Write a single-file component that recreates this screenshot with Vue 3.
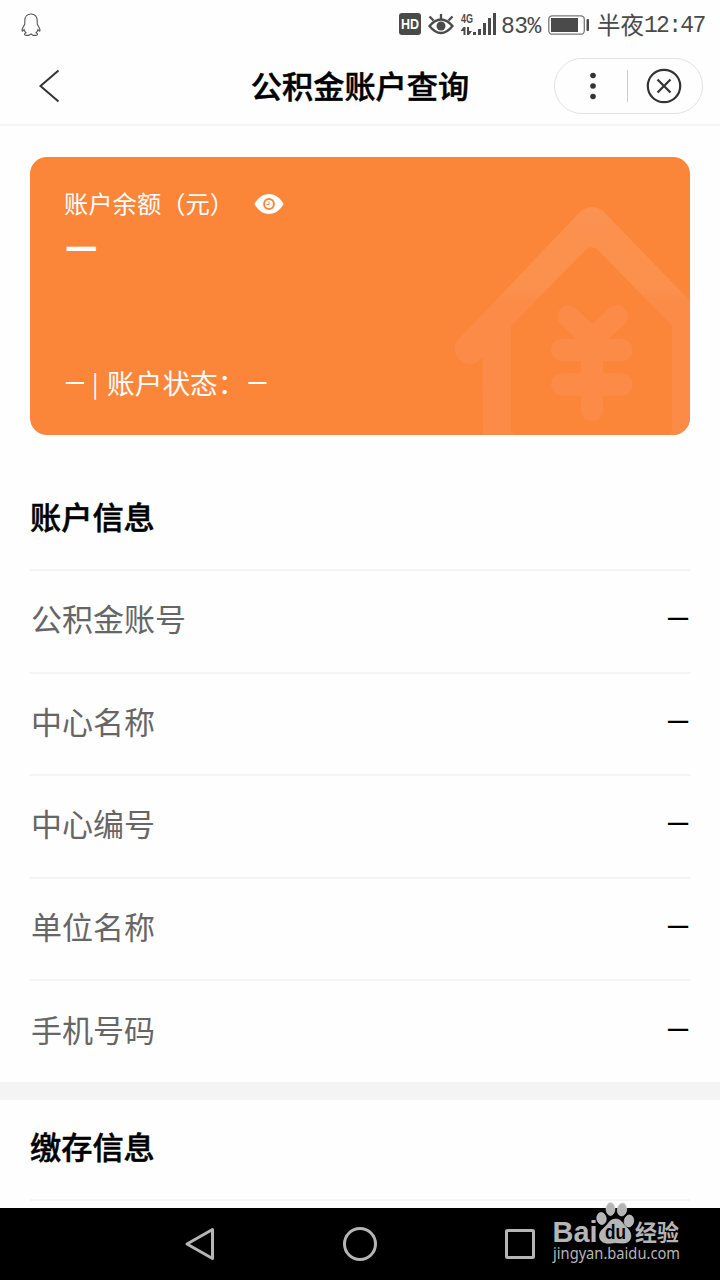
<template>
  <div class="page">
    <!-- 状态栏 -->
    <div class="status-bar">
      <svg class="qq-icon" width="22" height="26" viewBox="0 0 22 26" fill="none" stroke="#555" stroke-width="1.1">
        <path d="M11 2C7 2 4.800 5 4.800 8.700V12L2.400 16.500C1.700 18.500 2 20.200 3 18.800L4 17.700C4.300 19 5 20 5.900 20.700C3.800 21.700 4.200 23.400 6.200 23.400H8.700L11 22L13.300 23.400H15.800C17.800 23.400 18.200 21.700 16.100 20.700C17 20 17.700 19 18 17.700L19 18.800C20 20.200 20.300 18.500 19.600 16.500L17.200 12V8.700C17.200 5 15 2 11 2Z" />
      </svg>
      <svg class="status-icons" width="98" height="28" viewBox="0 0 98 28">
        <rect x="0" y="3" width="22" height="22" rx="3" fill="#4a4a4a" />
        <text x="2" y="19" textLength="18" lengthAdjust="spacingAndGlyphs" class="hd">HD</text>
        <g fill="none" stroke="#4a4a4a" stroke-width="2.3">
          <path d="M30.500 16Q36 9.500 42 9.500T53.500 16Q48 23 42 23T30.500 16Z" />
          <path d="M42 9V4M34.500 10.500L30.500 6.500M49.500 10.500L53.500 6.500" />
        </g>
        <circle cx="42" cy="16" r="4.500" fill="#4a4a4a" />
        <text x="62" y="13" textLength="12" lengthAdjust="spacingAndGlyphs" class="net">4G</text>
        <path fill="#4a4a4a" d="M64.500 17h2v8h-2v-4h-3zM68 17h2v4h3l-3 4h-2zM74 22h3v3h-3zM79 19h3v6h-3zM84 13h3v12h-3zM89 8h3v17h-3zM94 3h3v22h-3z" />
      </svg>
      <span class="percent">83%</span>
      <svg class="battery" width="42" height="22" viewBox="0 0 42 22">
        <rect x=".8" y="1.800" width="35.500" height="18.400" rx="3.500" fill="none" stroke="#777" stroke-width="1.300" />
        <rect x="3" y="4" width="27" height="14" fill="#4a4a4a" />
        <rect x="38.500" y="5" width="2.500" height="12" rx="1" fill="#4a4a4a" />
      </svg>
      <span class="period">半夜</span>
      <span class="clock">12:47</span>
    </div>

    <!-- 标题栏 -->
    <header class="nav">
      <svg class="back" width="24" height="36" viewBox="0 0 24 36" fill="none" stroke="#333" stroke-width="2">
        <path d="M20.500 2.500L2.500 18L20.500 33.500" />
      </svg>
      <h1>公积金账户查询</h1>
      <div class="capsule">
        <svg width="36" height="36" viewBox="0 0 36 36" fill="#333">
          <circle cx="18" cy="7.500" r="2.800" />
          <circle cx="18" cy="18" r="2.800" />
          <circle cx="18" cy="28.500" r="2.800" />
        </svg>
        <i class="divider"></i>
        <svg width="36" height="36" viewBox="0 0 36 36" fill="none" stroke="#333" stroke-width="2.200">
          <circle cx="18" cy="18" r="16.200" />
          <path d="M11.500 11.500L24.500 24.500M24.500 11.500L11.500 24.500" />
        </svg>
      </div>
    </header>

    <!-- 余额卡片 -->
    <section class="card">
      <svg class="house" width="240" height="232" viewBox="0 0 240 232">
        <defs>
          <linearGradient id="fade" x1="0" y1="0" x2="0" y2="1">
            <stop offset="0" stop-color="#fc924f" />
            <stop offset=".35" stop-color="#fc904d" />
            <stop offset=".43" stop-color="#fb8b46" />
            <stop offset="1" stop-color="#fb8b46" />
          </linearGradient>
        </defs>
        <path fill="url(#fade)" d="M130.500 8.500Q142 -1 153.500 8.500L240 98V232H220Q222 230 222 226V123L148.500 47.500Q142 41 135 47.500L61 123V226Q61 230 65 232H33L32.500 154L27 159A15 15 0 0 1 7 138Z" />
        <g fill="none" stroke="#fb8b46" stroke-width="22" stroke-linecap="round">
          <path d="M118.500 113.500L142 136L167 113.500M112 147H171.500M112 181.500H171.500M142 138V207" />
        </g>
      </svg>
      <div class="balance-label">
        <span>账户余额（元）</span>
        <svg width="30" height="22" viewBox="0 0 30 22">
          <path fill="#fff" d="M.5 11C3.500 5 9 1 15 1S26.500 5 29.500 11C26.500 17 21 21 15 21S3.500 17 .5 11Z" />
          <circle cx="15" cy="11" r="4.900" fill="none" stroke="#fb863a" stroke-width="2" />
          <path d="M12.500 11.500H15V8.500" fill="none" stroke="#fb863a" stroke-width="1" />
        </svg>
      </div>
      <div class="balance">—</div>
      <div class="state"><span class="dash">—</span><span class="bar">|</span><span>账户状态：</span><span class="dash last">—</span></div>
    </section>

    <!-- 账户信息 -->
    <section class="info">
      <h2>账户信息</h2>
      <div v-for="item in accountInfo" :key="item.label" class="row">
        <span>{{ item.label }}</span>
        <b>{{ item.value }}</b>
      </div>
    </section>
    <section class="info deposit">
      <h2>缴存信息</h2>
      <div class="row"></div>
    </section>

    <!-- 系统导航键 -->
    <footer class="keys">
      <svg width="36" height="36" viewBox="0 0 36 36"><path d="M30.500 3.500V32.500L5 18Z" /></svg>
      <svg width="36" height="36" viewBox="0 0 36 36"><circle cx="18" cy="18" r="15.500" /></svg>
      <svg width="36" height="36" viewBox="0 0 36 36"><rect x="4.500" y="4.500" width="27" height="27" rx="1" /></svg>
      <svg class="watermark" width="134" height="66" viewBox="0 0 134 66">
        <g class="paw">
          <ellipse cx="50.500" cy="18.500" rx="4.700" ry="6" transform="rotate(-10 50.500 18.500)" />
          <ellipse cx="59.500" cy="9" rx="4.500" ry="6.500" />
          <ellipse cx="71" cy="9.500" rx="4.700" ry="6.500" transform="rotate(8 71 9.500)" />
          <ellipse cx="78" cy="21" rx="4.700" ry="6" transform="rotate(10 78 21)" />
          <path d="M64.500 19C70 19 72 24 76 28C82 33 81 43 73 43C69 43.500 66 42 61 43C54 44 48.500 42 48.500 36C48.500 30 54 28 57.500 23Q60 19 64.500 19Z" />
        </g>
        <text class="brand" x="1.500" y="42" textLength="45" lengthAdjust="spacingAndGlyphs">Bai</text>
        <text class="du" x="54" y="38.500" textLength="21" lengthAdjust="spacingAndGlyphs">du</text>
        <text class="exp" x="84" y="40.500" textLength="44" lengthAdjust="spacingAndGlyphs">经验</text>
        <text class="site" x="2" y="59" textLength="127" lengthAdjust="spacingAndGlyphs">jingyan.baidu.com</text>
      </svg>
    </footer>
  </div>
</template>

<script setup>
import { ref } from 'vue'

const accountInfo = ref([
  { label: '公积金账号', value: '—' },
  { label: '中心名称', value: '—' },
  { label: '中心编号', value: '—' },
  { label: '单位名称', value: '—' },
  { label: '手机号码', value: '—' }
])
</script>

<style>
body {
  margin: 0;
  background: #fefefe;
}
</style>

<style scoped>
.page {
  width: 720px;
  height: 1280px;
  overflow: hidden;
  display: flex;
  flex-direction: column;
  background: #fefefe;
  font-family: "Noto Sans CJK SC", sans-serif;
  color: #000;
}

.page > * {
  flex-shrink: 0;
}

svg {
  display: block;
  flex-shrink: 0;
}

.status-bar {
  height: 48px;
  display: flex;
  align-items: center;
  padding: 0 16px 0 20px;
  color: #4a4a4a;
}

.qq-icon {
  margin-top: 2px;
}

.status-icons {
  margin-left: auto;
}

.hd {
  font: bold 15px "Liberation Sans", sans-serif;
  fill: #fff;
}

.net {
  font: bold 13px "Liberation Sans", sans-serif;
  fill: #4a4a4a;
}

.percent {
  width: 43px;
  padding: 6px 0 0 4px;
  font: 23px "Liberation Mono", monospace;
  letter-spacing: -0.5px;
}

.battery {
  margin-left: 4px;
  margin-top: 2px;
}

.period {
  margin-left: 7px;
  font-size: 23.5px;
  line-height: 30px;
  font-weight: 400;
}

.clock {
  padding-top: 3px;
  font: 23px "Liberation Mono", monospace;
  letter-spacing: -1.7px;
  width: 60px;
}

.nav {
  height: 76px;
  display: grid;
  grid-template-columns: 1fr auto 1fr;
  align-items: center;
  padding: 0 17px 0 38px;
  border-bottom: 2px solid #f4f4f4;
}

h1,
h2 {
  margin: 0;
  font-size: 31.2px;
  font-weight: 500;
  -webkit-text-stroke: 0.5px #000;
}

h1 {
  line-height: 40px;
  margin: 0 21px 3px 0;
}

.capsule {
  box-sizing: border-box;
  width: 149px;
  height: 56px;
  border: 1px solid #e2e2e2;
  border-radius: 28px;
  display: flex;
  align-items: center;
  padding: 0 20px;
  justify-self: end;
}

.divider {
  width: 1px;
  height: 32px;
  margin: 0 18px 0 16px;
  background: #ccc;
}

.card {
  position: relative;
  box-sizing: border-box;
  height: 278px;
  margin: 31px 30px 0;
  padding: 30px 34px 0;
  border-radius: 17px;
  background: #fb863a;
  color: #fff;
  overflow: hidden;
}

.house {
  position: absolute;
  right: 0;
  bottom: 0;
}

.balance-label {
  height: 34px;
  display: flex;
  align-items: center;
  font-size: 24.3px;
}

.balance-label span {
  margin-bottom: 3px;
}

.balance-label svg {
  margin-left: 20px;
}

.balance {
  height: 60px;
  line-height: 58px;
  font-size: 44px;
  font-weight: 500;
  font-family: Roboto, sans-serif;
}

.state {
  position: relative;
  display: flex;
  align-items: center;
  height: 40px;
  margin-top: 81px;
  font-size: 27.7px;
}

.dash {
  width: 28px;
  margin-top: 3px;
  font-family: Roboto, sans-serif;
}

.bar {
  width: 15px;
  font-size: 24px;
}

.last {
  margin-left: 1px;
}

.info {
  padding: 0 30px;
}

.info h2 {
  padding: 61px 0 34px;
  line-height: 39px;
}

.row {
  box-sizing: border-box;
  height: 102.6px;
  display: flex;
  align-items: center;
  justify-content: space-between;
  border-top: 2px solid #f4f4f4;
  font-size: 31px;
}

.row span {
  padding-left: 1px;
  margin-bottom: 7px;
  color: #666;
}

.row b {
  margin-bottom: 3px;
  font-family: Roboto, sans-serif;
  font-weight: 400;
}

.deposit {
  height: 108px;
  overflow: hidden;
  border-top: 18px solid #f4f4f4;
}

.deposit h2 {
  padding: 26px 0 34px;
}

.keys {
  position: relative;
  height: 72px;
  display: flex;
  align-items: center;
  gap: 124px;
  padding-left: 182px;
  background: #000;
}

.keys > svg:not(.watermark) {
  fill: none;
  stroke: #b5b5b5;
  stroke-width: 3;
  stroke-linejoin: round;
}

.watermark {
  position: absolute;
  left: 551px;
  top: -8px;
  overflow: visible;
  fill: #b5b5b5;
}

.paw {
  stroke: #d8d8d8;
  stroke-width: 0.6;
}

.brand {
  font: bold 30px "Liberation Sans", sans-serif;
}

.du {
  font: bold 20px "Liberation Sans", sans-serif;
  fill: #000;
}

.exp {
  font: bold 23px "Noto Sans CJK SC", sans-serif;
}

.site {
  font: 16px "Noto Sans", sans-serif;
}
</style>
